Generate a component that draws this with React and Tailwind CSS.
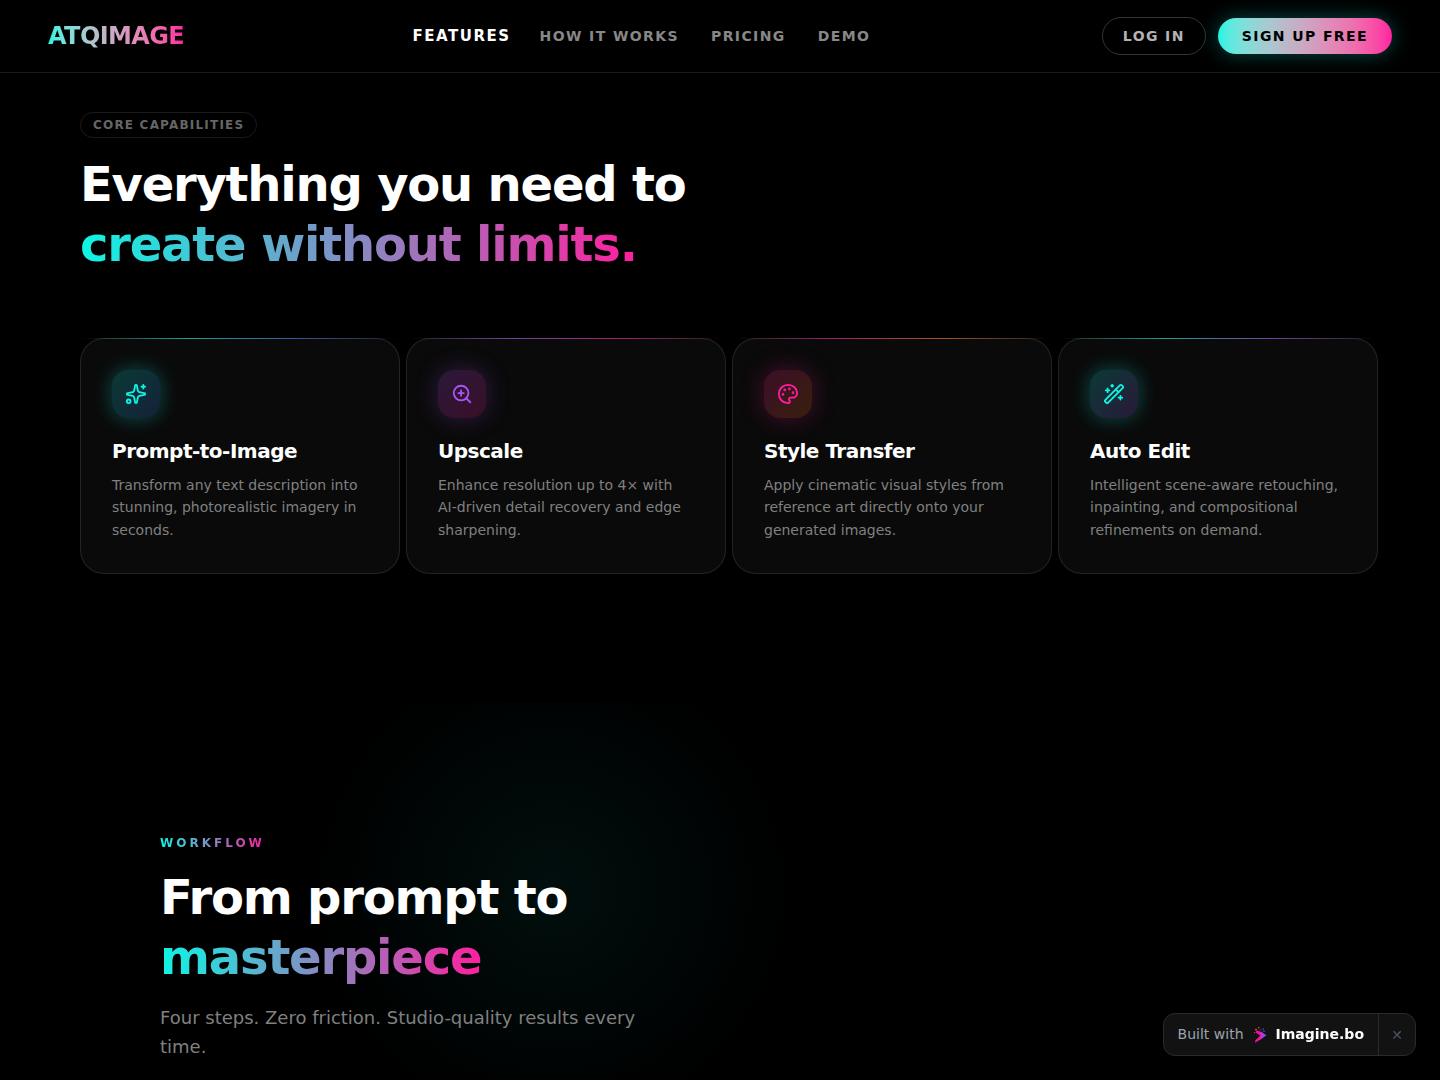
import React, { useState } from "react";
import { Palette, Sparkles, WandSparkles, ZoomIn } from "lucide-react";

const NAV_LINKS = [
  { label: "Features", href: "#features" },
  { label: "How it works", href: "#workflow" },
  { label: "Pricing", href: "#pricing" },
  { label: "Demo", href: "#demo" },
];

const FEATURES = [
  {
    title: "Prompt-to-Image",
    description:
      "Transform any text description into stunning, photorealistic imagery in seconds.",
    icon: Sparkles,
    iconClass:
      "text-[#0ff5e4] bg-[linear-gradient(135deg,rgba(15,245,228,0.2),rgba(59,130,246,0.2))] shadow-[0_0_20px_rgba(15,245,228,0.3)]",
    line: "bg-[linear-gradient(90deg,transparent,#0ff5e4,#3b82f6,transparent)]",
  },
  {
    title: "Upscale",
    description:
      "Enhance resolution up to 4× with AI-driven detail recovery and edge sharpening.",
    icon: ZoomIn,
    iconClass:
      "text-[#a855f7] bg-[linear-gradient(135deg,rgba(168,85,247,0.2),rgba(255,31,160,0.2))] shadow-[0_0_24px_rgba(168,85,247,0.25)]",
    line: "bg-[linear-gradient(90deg,transparent,#a855f7,#ff1fa0,transparent)]",
  },
  {
    title: "Style Transfer",
    description:
      "Apply cinematic visual styles from reference art directly onto your generated images.",
    icon: Palette,
    iconClass:
      "text-[#ff1fa0] bg-[linear-gradient(135deg,rgba(255,31,160,0.2),rgba(249,115,22,0.2))] shadow-[0_0_24px_rgba(255,31,160,0.25)]",
    line: "bg-[linear-gradient(90deg,transparent,#ff1fa0,#f97316,transparent)]",
  },
  {
    title: "Auto Edit",
    description:
      "Intelligent scene-aware retouching, inpainting, and compositional refinements on demand.",
    icon: WandSparkles,
    iconClass:
      "text-[#0ff5e4] bg-[linear-gradient(135deg,rgba(15,245,228,0.2),rgba(168,85,247,0.2))] shadow-[0_0_20px_rgba(15,245,228,0.3)]",
    line: "bg-[linear-gradient(90deg,transparent,#0ff5e4,#a855f7,transparent)]",
  },
];

function GradientText({ children, className = "" }) {
  return (
    <span
      className={`bg-[linear-gradient(90deg,#0ff5e4,#ff1fa0)] bg-clip-text text-transparent ${className}`}
    >
      {children}
    </span>
  );
}

function Header() {
  const [active, setActive] = useState("Features");

  return (
    <header className="border-b border-white/10">
      <div className="flex h-18 items-center justify-between px-12">
        <a
          href="#top"
          className="bg-linear-to-r from-[#0ff5e4] to-[#ff1fa0] bg-clip-text text-2xl font-bold tracking-tight text-transparent"
        >
          ATQIMAGE
        </a>

        {/* The active link is one size up; its margins keep the others still */}
        <nav className="flex items-center gap-8">
          {NAV_LINKS.map((link) => (
            <a
              key={link.label}
              href={link.href}
              onClick={() => setActive(link.label)}
              className={`leading-5 font-semibold tracking-widest uppercase ${
                active === link.label
                  ? "-mx-[3px] text-[15px] text-white"
                  : "text-[14px] text-[#888888] hover:text-white"
              }`}
            >
              {link.label}
            </a>
          ))}
        </nav>

        <div className="flex items-center gap-3">
          <button className="rounded-full border border-white/20 px-5 py-2 text-sm font-semibold tracking-widest text-[#b3b3b3] uppercase">
            Log in
          </button>
          <button className="rounded-full bg-linear-to-r from-[#0ff5e4] to-[#ff1fa0] px-6 py-2 text-sm font-bold tracking-widest text-black uppercase shadow-[0_0_20px_rgba(15,245,228,0.3)]">
            Sign up free
          </button>
        </div>
      </div>
    </header>
  );
}

function FeatureCard({ feature }) {
  const Icon = feature.icon;

  return (
    <article className="relative rounded-3xl border border-white/10 bg-[#0a0a0a] p-[31px] pb-8">
      {/* Accent line over the top border */}
      <div
        className={`absolute -inset-x-px -top-px h-px opacity-60 ${feature.line}`}
      />
      <div
        className={`mb-5 flex size-12 items-center justify-center rounded-2xl ${feature.iconClass}`}
      >
        <Icon size={22} strokeWidth={2} />
      </div>
      <h3 className="mb-[10px] text-xl leading-[26px] font-bold tracking-tight text-white">
        {feature.title}
      </h3>
      <p className="text-sm leading-[1.6] text-[#808080]">
        {feature.description}
      </p>
    </article>
  );
}

function ImagineLogo() {
  return (
    <svg width="16" height="16" viewBox="0 0 16 16" aria-hidden="true">
      <defs>
        <linearGradient id="imagine-fill" x1="0" y1="0" x2="1" y2="0">
          <stop offset="0.35" stopColor="#ff0a9c" />
          <stop offset="0.65" stopColor="#b43be0" />
          <stop offset="1" stopColor="#2f6bff" />
        </linearGradient>
      </defs>
      <path
        d="M4.6 3.6 L9.6 5 L14.4 8.3 L9 12.2 L3 15.8 L3.4 13.2 L8.4 8.6 L3.6 5.6 Z"
        fill="url(#imagine-fill)"
      />
      <circle cx="6.8" cy="0.8" r="0.7" fill="#ff6a2b" />
      <circle cx="4" cy="2.6" r="0.9" fill="#ff5a3c" />
      <circle cx="2.6" cy="5.6" r="0.6" fill="#ff2a80" />
      <circle cx="9" cy="2.8" r="0.6" fill="#a83be0" />
      <circle cx="11.2" cy="2" r="0.7" fill="#2f6bff" />
      <circle cx="12" cy="4.2" r="0.8" fill="#2f6bff" />
    </svg>
  );
}

function BuiltWithBadge() {
  const [visible, setVisible] = useState(true);

  if (!visible) return null;

  return (
    <div className="fixed right-6 bottom-6 flex rounded-xl border border-[#2a2a2a] bg-[#121212]">
      <a
        href="#imagine"
        className="flex items-center gap-2 px-3.5 py-2.5 text-sm leading-[21px] text-[#9ca3af]"
      >
        Built with
        <ImagineLogo />
        <span className="font-semibold text-white">Imagine.bo</span>
      </a>
      <button
        aria-label="Dismiss"
        onClick={() => setVisible(false)}
        className="flex w-[37px] items-center justify-center border-l border-[#2a2a2a] text-sm text-[#4b5563]"
      >
        ✕
      </button>
    </div>
  );
}

export default function App() {
  return (
    <div
      id="top"
      className="flex min-h-screen flex-col bg-black font-['DejaVu_Sans',sans-serif] text-white"
    >
      <Header />

      <main className="flex flex-1 flex-col">
        <section id="features" className="pt-[39px] pr-[62px] pb-32 pl-20">
          <div className="flex">
            <span className="rounded-full border border-white/10 px-3 py-1 text-xs font-semibold tracking-widest text-[#666666] uppercase">
              Core capabilities
            </span>
          </div>
          <h2 className="mt-4 text-5xl leading-tight font-bold tracking-tight">
            Everything you need to
            <br />
            <GradientText>create without limits.</GradientText>
          </h2>

          <div className="mt-16 grid grid-cols-4 gap-[6px]">
            {FEATURES.map((feature) => (
              <FeatureCard key={feature.title} feature={feature} />
            ))}
          </div>
        </section>

        <section
          id="workflow"
          className="relative flex-1 overflow-hidden px-40 pt-[133px]"
        >
          {/* Ambient glow */}
          <div className="pointer-events-none absolute -top-[112px] left-[252px] size-[600px] rounded-full bg-[radial-gradient(circle_closest-side,rgba(15,245,228,0.06)_0%,transparent_80%)]" />
          <div className="relative">
            <div className="flex text-xs font-semibold">
              <GradientText className="tracking-[0.25em] uppercase">
                Workflow
              </GradientText>
            </div>
            <h2 className="mt-4 text-5xl leading-tight font-bold tracking-tight">
              From prompt to
              <br />
              <GradientText>masterpiece</GradientText>
            </h2>
            <p className="mt-4 max-w-lg text-lg leading-[29px] text-[#808080]">
              Four steps. Zero friction. Studio-quality results every time.
            </p>
          </div>
        </section>
      </main>

      <BuiltWithBadge />
    </div>
  );
}
